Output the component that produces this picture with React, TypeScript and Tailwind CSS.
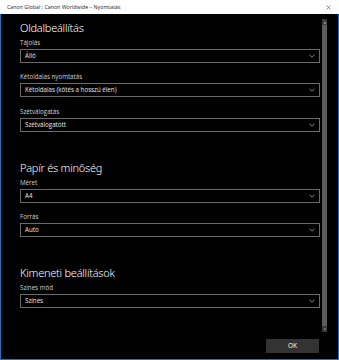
import React from "react";

const font = { fontFamily: '"Noto Sans", "Open Sans", sans-serif' };
const small = { fontFamily: '"Open Sans", "Noto Sans", sans-serif' };

function Chevron() {
  return (
    <svg width="6" height="4" viewBox="0 0 6 4" className="block">
      <path d="M0.5 0.8 L3 3.2 L5.5 0.8" fill="none" stroke="#bdbdbd" strokeWidth="0.7" />
    </svg>
  );
}

function Field({ label, value, gap }: { label: string; value: string; gap?: string }) {
  return (
    <div className={`flex flex-col ${gap ?? ""}`} style={small}>
      <div className="h-[8px] text-[6.2px] leading-[8px] text-[#d2d2d2]">{label}</div>
      <div className="mt-[2px] h-[14px] border border-[#6a6a6a] flex items-center justify-between pl-[4px] pr-[4px]">
        <span className="text-[6.2px] leading-[12px] text-[#e8e8e8]">{value}</span>
        <Chevron />
      </div>
    </div>
  );
}

function Heading({ text, className }: { text: string; className?: string }) {
  return (
    <div className={`h-[14px] text-[11px] leading-[14px] tracking-[-0.25px] font-light text-white ${className ?? ""}`}>{text}</div>
  );
}

export default function App() {
  return (
    <div className="w-[339px] h-[360px] flex flex-col bg-black" style={font}>
      <div className="h-[14px] bg-white flex items-center justify-between pl-[7px] pr-[8px] shrink-0">
        <span className="text-[5.3px] leading-[14px] text-[#222]" style={small}>Canon Global : Canon Worldwide – Nyomtatás</span>
        <svg width="5" height="5" viewBox="0 0 5 5">
          <path d="M0.5 0.5 L4.5 4.5 M4.5 0.5 L0.5 4.5" stroke="#444" strokeWidth="0.6" />
        </svg>
      </div>
      <div className="flex-1 flex flex-col bg-black border-l border-r border-b border-[#1a74c9]">
        <div className="flex flex-row h-[318px]">
          <div className="flex-1 flex flex-col pl-[19px] pt-[7px]">
            <Heading text="Oldalbeállítás" />
            <div className="mt-[4px]">
              <Field label="Tájolás" value="Álló" />
            </div>
            <Field label="Kétoldalas nyomtatás" value="Kétoldalas (kötés a hosszú élen)" gap="mt-[10px]" />
            <Field label="Szétválogatás" value="Szétválogatott" gap="mt-[11px]" />
            <Heading text="Papír és minőség" className="mt-[29px]" />
            <div className="mt-[4px]">
              <Field label="Méret" value="A4" />
            </div>
            <Field label="Forrás" value="Auto" gap="mt-[10px]" />
            <Heading text="Kimeneti beállítások" className="mt-[29px]" />
            <div className="mt-[4px]">
              <Field label="Színes mód" value="Színes" />
            </div>
          </div>
          <div className="w-[5px] ml-[2px] mr-[11px] mt-[5px] flex flex-col bg-[#3a3a3a]">
            <div className="h-[6px] flex items-center justify-center">
              <svg width="4" height="3" viewBox="0 0 4 3">
                <path d="M0.5 2.5 L2 0.8 L3.5 2.5 Z" fill="#bbb" />
              </svg>
            </div>
            <div className="flex-1 bg-[#5c5c5c]" />
            <div className="h-[6px] flex items-center justify-center">
              <svg width="4" height="3" viewBox="0 0 4 3">
                <path d="M0.5 0.5 L2 2.2 L3.5 0.5 Z" fill="#888" />
              </svg>
            </div>
          </div>
        </div>
        <div className="flex justify-end pr-[19px] pt-[7px]">
          <div className="w-[53px] h-[14px] bg-[#333333] flex items-center justify-center text-[6.5px] text-white" style={small}>
            OK
          </div>
        </div>
      </div>
    </div>
  );
}
